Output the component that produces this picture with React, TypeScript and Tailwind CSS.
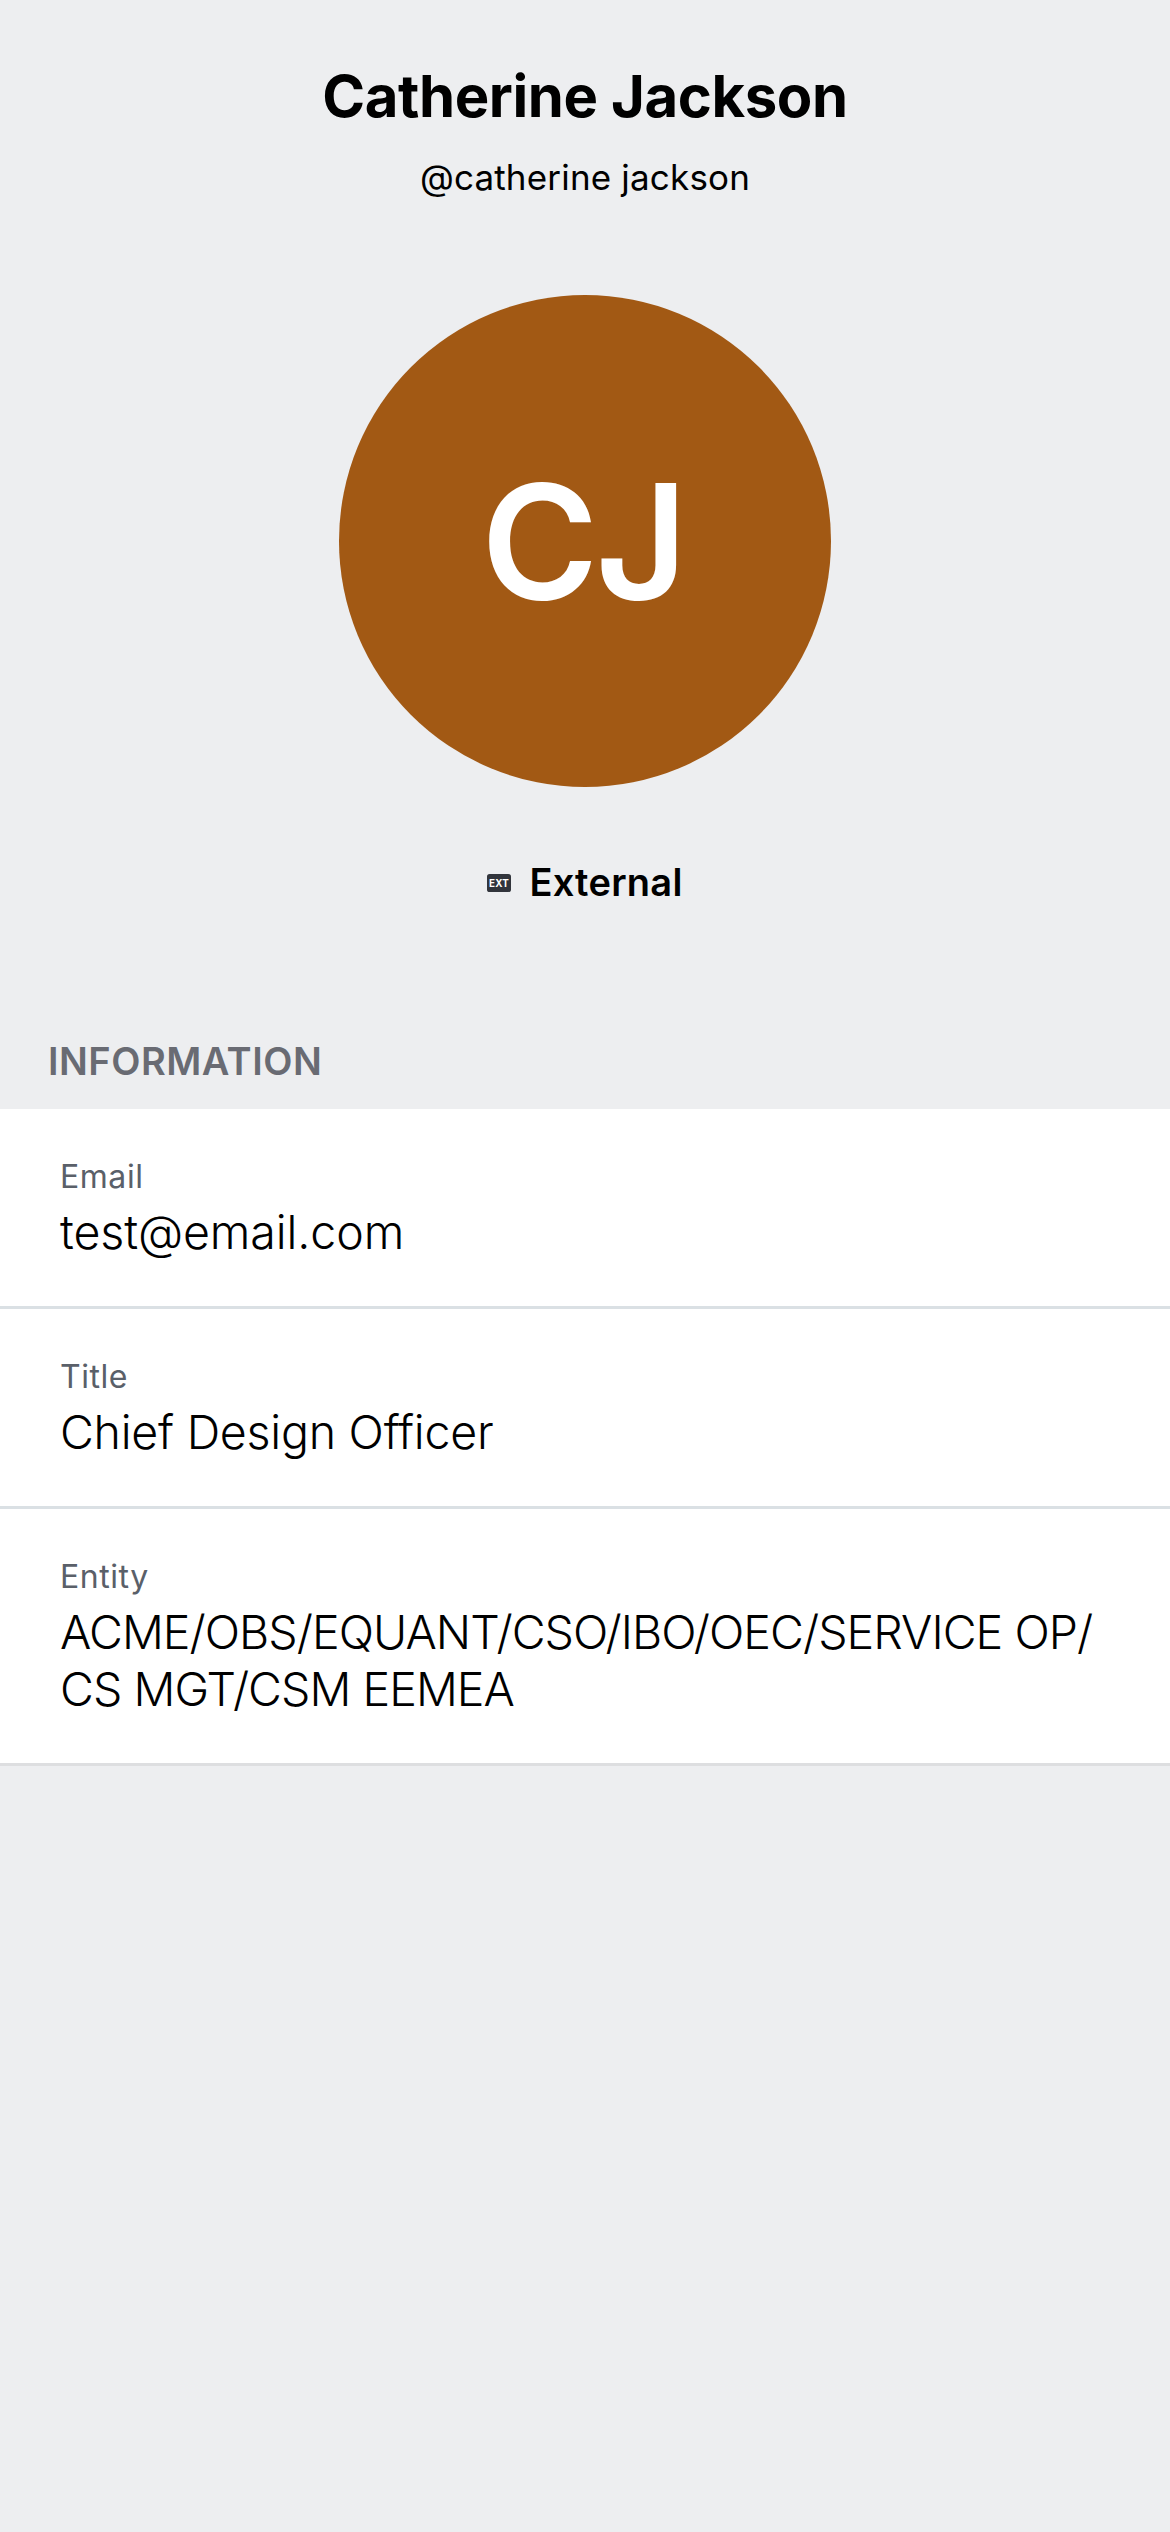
type Row = { label: string; lines: string[]; tracking: string; divider: string };

const rows: Row[] = [
  { label: "Email", lines: ["test@email.com"], tracking: "tracking-[-0.1px]", divider: "border-[#dae0e4]" },
  { label: "Title", lines: ["Chief Design Officer"], tracking: "tracking-[-0.25px]", divider: "border-[#dae0e4]" },
  {
    label: "Entity",
    lines: ["ACME/OBS/EQUANT/CSO/IBO/OEC/SERVICE OP/", "CS MGT/CSM EEMEA"],
    tracking: "tracking-[-0.95px]",
    divider: "border-[#dddee0]",
  },
];

function ExternalBadge() {
  return (
    <svg viewBox="0 0 24 18" className="mt-[2px] h-[18px] w-6">
      <rect width="24" height="18" rx="2.6" fill="#32353c" />
      <text x="12" y="13" textAnchor="middle" fontSize="9.8" fontWeight="700" fill="white">
        EXT
      </text>
    </svg>
  );
}

export default function App() {
  return (
    <main className="flex min-h-screen flex-col bg-[#edeef0] font-['Inter',sans-serif] text-black">
      <header className="flex flex-col items-center pt-[60px]">
        <h1 className="text-[58px] leading-[72px] font-bold tracking-[-0.4px]">Catherine Jackson</h1>
        <p className="mt-[21px] text-[35px] leading-[48px] tracking-[0.18px]">@catherine jackson</p>
        <div className="mt-[94px] flex h-[492px] w-[492px] items-center justify-center rounded-full bg-[#a25914] pr-1 text-[159px] font-semibold tracking-[-3px] text-white">
          CJ
        </div>
        <div className="mt-[71px] flex h-12 items-center gap-[18px] text-[38px] font-semibold tracking-[0.25px]">
          <ExternalBadge />
          <span>External</span>
        </div>
      </header>
      <h2 className="mt-[131px] ml-12 h-[72px] text-[38px] leading-[48px] font-semibold tracking-[0.5px] text-[#696b73]">
        INFORMATION
      </h2>
      <section>
        {rows.map((row) => (
          <div key={row.label} className={`border-b-3 bg-white px-[60px] pt-[47px] pb-[45px] ${row.divider}`}>
            <div className="text-[32px] leading-[42px] tracking-[0.55px] text-[#5a6069]">{row.label}</div>
            <div className={`mt-[6px] text-[46.5px] leading-[57px] font-light whitespace-nowrap ${row.tracking}`}>
              {row.lines.map((line) => (
                <div key={line}>{line}</div>
              ))}
            </div>
          </div>
        ))}
      </section>
    </main>
  );
}
